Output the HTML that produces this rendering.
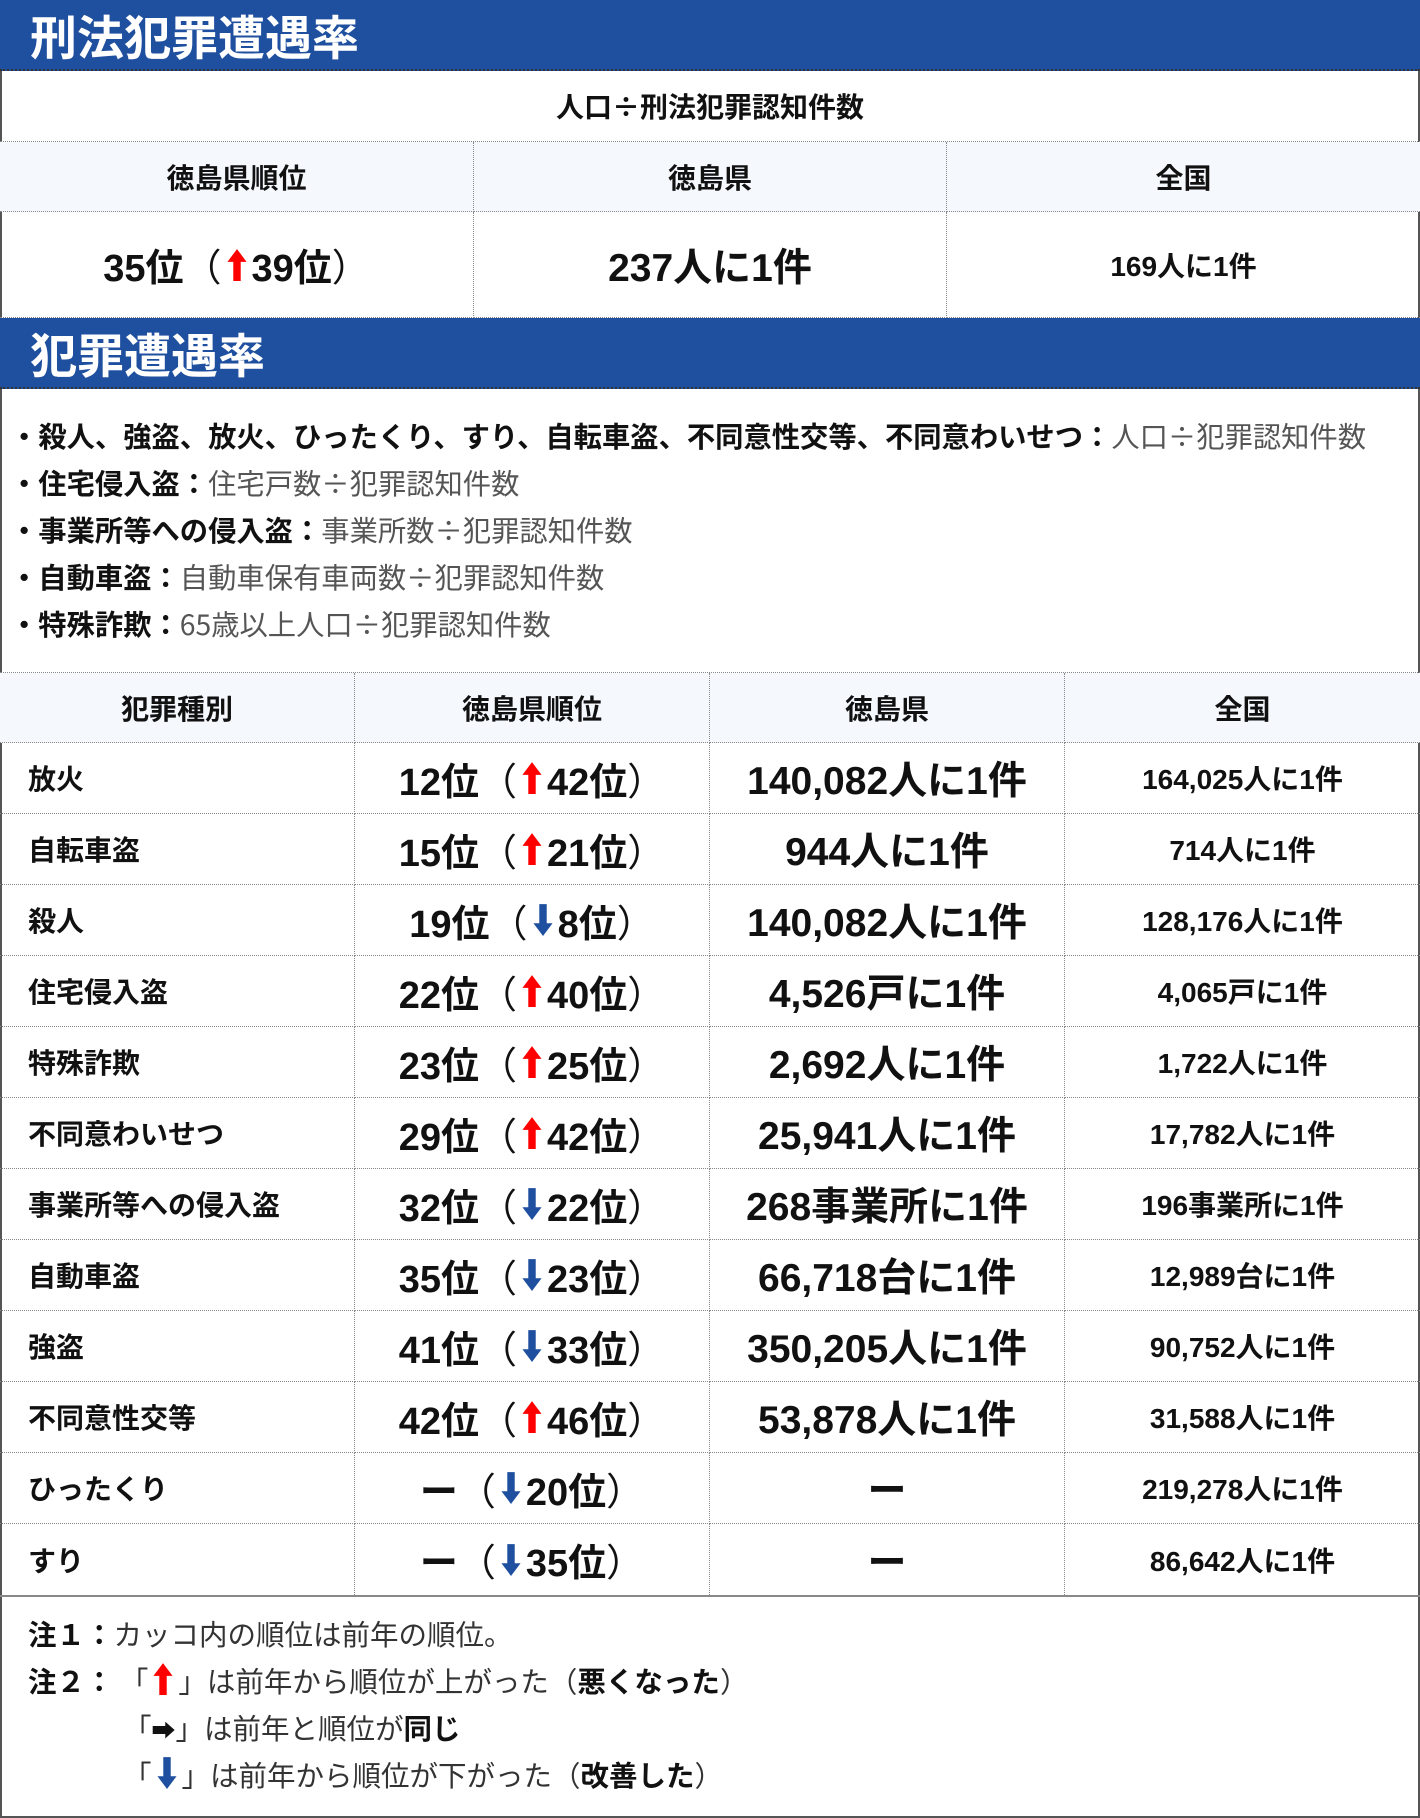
<!DOCTYPE html>
<html><head><meta charset="utf-8">
<style>
*{margin:0;padding:0;box-sizing:border-box}
body{width:1420px;height:1818px;background:#fff;font-family:"Liberation Sans","Noto Sans CJK JP",sans-serif;color:#111;position:relative;overflow:hidden}
.wrap{position:absolute;left:0;top:0;width:1420px;height:1818px;border:2px solid #555}
.band{position:absolute;left:0;width:1420px;height:71px;background:#1f4f9f;color:#fff;font-weight:bold;font-size:47px;line-height:69px;padding-left:30px;border-bottom:2px dotted #333;font-family:"Noto Sans CJK JP",sans-serif}
.cell{position:absolute;display:flex;align-items:center;justify-content:center;font-weight:bold;border-bottom:1px dotted #888;border-right:1px dotted #888;white-space:nowrap}
.hd{background:#f5f8fd;font-size:28px}
.l{justify-content:flex-start;padding-left:28px;font-size:28px}
.big{font-size:38px}
.pref{font-size:39px}
.nat{font-size:28px}
.p{font-family:"Noto Sans CJK JP",sans-serif;font-weight:normal}
.up,.dn{display:inline-block;width:24px;height:34px;margin:0 3px;vertical-align:-4px}
.bul{position:absolute;left:10px;font-size:28.3px;color:#555;white-space:nowrap;font-family:"Noto Sans CJK JP",sans-serif;line-height:40px}
.bul b{color:#111}
.note{position:absolute;left:28px;font-size:28.5px;color:#333;white-space:nowrap;font-family:"Noto Sans CJK JP",sans-serif;line-height:40px}
.note b{color:#111}
</style></head><body>
<svg width="0" height="0" style="position:absolute">
<defs>
<symbol id="au" viewBox="0 0 20 32"><path d="M10 1 L19 13 L13.5 13 L13.5 31 L6.5 31 L6.5 13 L1 13 Z" fill="#f00"/></symbol>
<symbol id="ad" viewBox="0 0 20 32"><path d="M10 31 L19 19 L13.5 19 L13.5 1 L6.5 1 L6.5 19 L1 19 Z" fill="#1f4f9f"/></symbol>
</defs></svg>
<div class="wrap"></div>
<div class="band" style="top:0">刑法犯罪遭遇率</div>
<div class="cell" style="left:0;top:71px;width:1420px;height:71px;font-size:28px;border-right:none;font-family:'Noto Sans CJK JP',sans-serif">人口÷刑法犯罪認知件数</div>
<div class="cell hd" style="left:0;top:142px;width:474px;height:70px">徳島県順位</div>
<div class="cell hd" style="left:474px;top:142px;width:473px;height:70px">徳島県</div>
<div class="cell hd" style="left:947px;top:142px;width:473px;height:70px;border-right:none">全国</div>
<div class="cell big" style="left:0;top:212px;width:474px;height:106px">35位<span class="p">（</span><svg class="up"><use href="#au"/></svg>39位<span class="p">）</span></div>
<div class="cell pref" style="left:474px;top:212px;width:473px;height:106px">237人に1件</div>
<div class="cell nat" style="left:947px;top:212px;width:473px;height:106px;border-right:none">169人に1件</div>
<div class="band" style="top:318px">犯罪遭遇率</div>
<div class="bul" style="top:416px"><b>・殺人、強盗、放火、ひったくり、すり、自転車盗、不同意性交等、不同意わいせつ：</b>人口÷犯罪認知件数</div>
<div class="bul" style="top:463px"><b>・住宅侵入盗：</b>住宅戸数÷犯罪認知件数</div>
<div class="bul" style="top:510px"><b>・事業所等への侵入盗：</b>事業所数÷犯罪認知件数</div>
<div class="bul" style="top:557px"><b>・自動車盗：</b>自動車保有車両数÷犯罪認知件数</div>
<div class="bul" style="top:604px"><b>・特殊詐欺：</b>65歳以上人口÷犯罪認知件数</div>
<div style="position:absolute;left:0;top:672px;width:1420px;border-top:1px dotted #888"></div>
<div id="t"></div>
<div style="position:absolute;left:0;top:1595px;width:1420px;border-top:2px solid #888"></div>
<div class="note" style="top:1614px"><b>注１：</b>カッコ内の順位は前年の順位。</div>
<div class="note" style="top:1661px"><b>注２：</b> 「<svg class="up"><use href="#au"/></svg>」は前年から順位が上がった（<b>悪くなった</b>）</div>
<div class="note" style="top:1708px;left:123px">「<b style="font-size:24px">➡</b>」は前年と順位が<b>同じ</b></div>
<div class="note" style="top:1755px;left:123px">「<svg class="dn"><use href="#ad"/></svg>」は前年から順位が下がった（<b>改善した</b>）</div>
<script>
var rows=[["放火","12位","u","42位","140,082人に1件","164,025人に1件"],
["自転車盗","15位","u","21位","944人に1件","714人に1件"],
["殺人","19位","d","8位","140,082人に1件","128,176人に1件"],
["住宅侵入盗","22位","u","40位","4,526戸に1件","4,065戸に1件"],
["特殊詐欺","23位","u","25位","2,692人に1件","1,722人に1件"],
["不同意わいせつ","29位","u","42位","25,941人に1件","17,782人に1件"],
["事業所等への侵入盗","32位","d","22位","268事業所に1件","196事業所に1件"],
["自動車盗","35位","d","23位","66,718台に1件","12,989台に1件"],
["強盗","41位","d","33位","350,205人に1件","90,752人に1件"],
["不同意性交等","42位","u","46位","53,878人に1件","31,588人に1件"],
["ひったくり","—","d","20位","—","219,278人に1件"],
["すり","—","d","35位","—","86,642人に1件"]];
var x=[0,355,710,1065],h="";
var hd=["犯罪種別","徳島県順位","徳島県","全国"];
for(var i=0;i<4;i++)h+='<div class="cell hd" style="left:'+x[i]+'px;top:673px;width:355px;height:70px;'+(i==3?'border-right:none':'')+'">'+hd[i]+'</div>';
rows.forEach(function(r,j){var t=743+j*71;var last=j==11?'border-bottom:none;':'';
var d=r[1]=="—"?'<span class="p" style="font-weight:bold">ー</span>':r[1];
var e=r[4]=="—"?'<span class="p" style="font-weight:bold">ー</span>':r[4];
h+='<div class="cell l" style="left:0;top:'+t+'px;width:355px;height:71px;'+last+'">'+r[0]+'</div>';
h+='<div class="cell big" style="left:355px;top:'+t+'px;width:355px;height:71px;'+last+'">'+d+'<span class="p">（</span><svg class="'+(r[2]=="u"?"up":"dn")+'"><use href="#a'+r[2]+'"/></svg>'+r[3]+'<span class="p">）</span></div>';
h+='<div class="cell pref" style="left:710px;top:'+t+'px;width:355px;height:71px;'+last+'">'+e+'</div>';
h+='<div class="cell nat" style="left:1065px;top:'+t+'px;width:355px;height:71px;border-right:none;'+last+'">'+r[5]+'</div>';});
document.getElementById("t").innerHTML=h;
</script>
</body></html>
